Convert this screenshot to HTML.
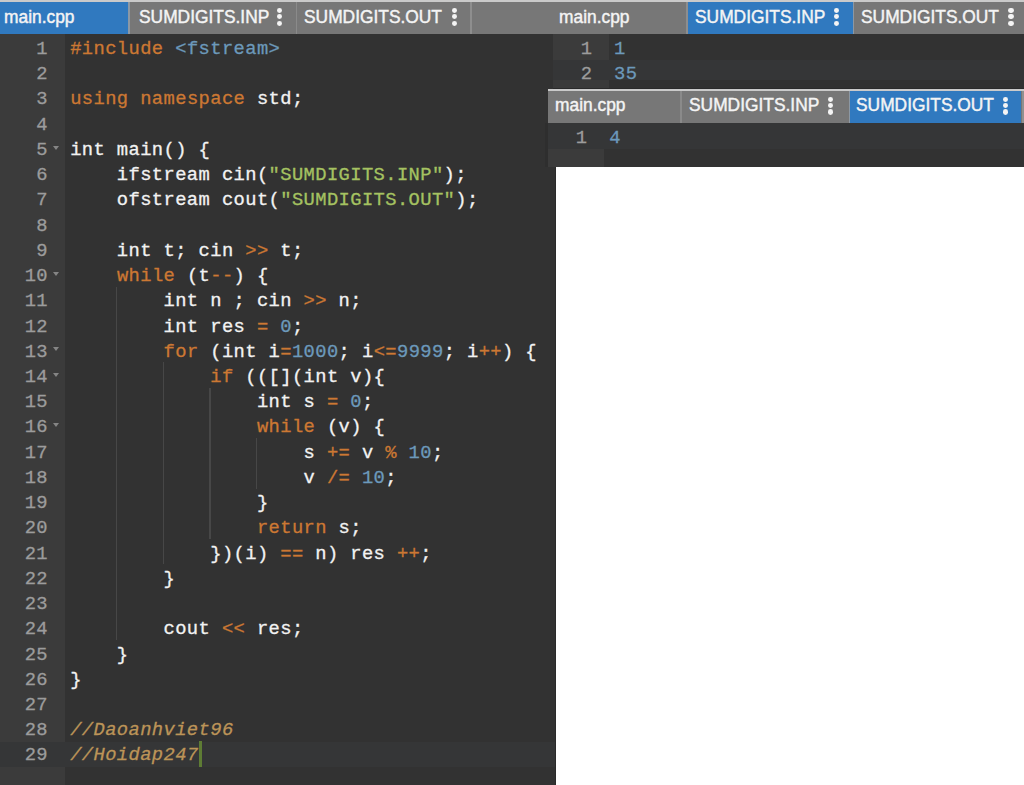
<!DOCTYPE html>
<html><head><meta charset="utf-8">
<style>
*{margin:0;padding:0;box-sizing:border-box}
html,body{width:1024px;height:785px;overflow:hidden;background:#323232;position:relative}
.a{position:absolute}
.tab{position:absolute;color:#f4f4f4;font-family:"Liberation Sans",sans-serif;font-size:18.3px;white-space:nowrap;-webkit-text-stroke:0.45px}
.tab span{position:absolute;transform-origin:0 0;transform:scaleX(0.95)}
.tab i{position:absolute;border-radius:46%;background:#f4f4f4}
.code{font-family:"Liberation Mono",monospace;font-size:18.8px;letter-spacing:0.398px;white-space:pre;color:#f2f2f2;-webkit-text-stroke:0.3px}
.ln{position:absolute;left:0;height:25.23px;line-height:25.23px}
.tx{position:relative;top:2.5px}
.k{color:#cc7833}.n{color:#6c99bb}.s{color:#a5c261}.c{color:#bc9458;font-style:italic}
.fold{position:absolute;width:0;height:0;border-left:3.6px solid transparent;border-right:3.6px solid transparent;border-top:4.6px solid #858585}
</style></head><body>
<div class="a" style="left:0px;top:0px;width:1024px;height:33.9px;background:#777777;"></div>
<div class="a" style="left:0px;top:0px;width:1024px;height:1.8px;background:#cacaca;"></div>
<div class="tab" style="left:0px;top:1.8px;width:128.3px;height:32.1px;background:#3079bf"><span style="left:3.5px;top:4px">main.cpp</span></div>
<div class="a" style="left:128.3px;top:1.8px;width:1.7px;height:32.1px;background:#8c98a4;"></div>
<div class="tab" style="left:130px;top:1.8px;width:166px;height:32.1px;background:#777777"><span style="left:8.5px;top:4px">SUMDIGITS.INP</span><i style="left:147.1px;top:6.1px;width:5.4px;height:5.2px"></i><i style="left:147.1px;top:12.45px;width:5.4px;height:5.2px"></i><i style="left:147.1px;top:18.8px;width:5.4px;height:5.2px"></i></div>
<div class="a" style="left:296px;top:1.8px;width:1.2px;height:32.1px;background:#8a8a8a;"></div>
<div class="tab" style="left:297.2px;top:1.8px;width:173.3px;height:32.1px;background:#777777"><span style="left:7.3px;top:4px">SUMDIGITS.OUT</span><i style="left:154.4px;top:6.1px;width:5.4px;height:5.2px"></i><i style="left:154.4px;top:12.45px;width:5.4px;height:5.2px"></i><i style="left:154.4px;top:18.8px;width:5.4px;height:5.2px"></i></div>
<div class="a" style="left:470.3px;top:1.8px;width:1.4px;height:32.1px;background:#8e8e8e;"></div>
<div class="tab" style="left:553px;top:1.8px;width:135px;height:32.1px;background:#777777"><span style="left:6.1px;top:4px">main.cpp</span></div>
<div class="a" style="left:685.8px;top:1.8px;width:2.2px;height:32.1px;background:#8e8e8e;"></div>
<div class="tab" style="left:688px;top:1.8px;width:164.5px;height:32.1px;background:#3079bf"><span style="left:7.3px;top:4px">SUMDIGITS.INP</span><i style="left:146.1px;top:6.1px;width:5.4px;height:5.2px"></i><i style="left:146.1px;top:12.45px;width:5.4px;height:5.2px"></i><i style="left:146.1px;top:18.8px;width:5.4px;height:5.2px"></i></div>
<div class="a" style="left:852.5px;top:1.8px;width:1.5px;height:32.1px;background:#8c98a4;"></div>
<div class="tab" style="left:854px;top:1.8px;width:170px;height:32.1px;background:#777777"><span style="left:7px;top:4px">SUMDIGITS.OUT</span><i style="left:154.3px;top:6.1px;width:5.4px;height:5.2px"></i><i style="left:154.3px;top:12.45px;width:5.4px;height:5.2px"></i><i style="left:154.3px;top:18.8px;width:5.4px;height:5.2px"></i></div>
<div class="a" style="left:0px;top:33.9px;width:65px;height:751.1px;background:#3b3b3b;"></div>
<div class="a" style="left:0px;top:741.6px;width:555.8px;height:25.8px;background:#353637;"></div>
<div class="a" style="left:115.92px;top:286.8px;width:1.2px;height:353.22px;background:#474747;"></div>
<div class="a" style="left:162.64px;top:362.49px;width:1.2px;height:201.84px;background:#474747;"></div>
<div class="a" style="left:209.36px;top:387.72px;width:1.2px;height:151.38px;background:#474747;"></div>
<div class="a" style="left:256.08px;top:438.18px;width:1.2px;height:50.46px;background:#474747;"></div>
<div class="fold" style="left:52.8px;top:145.62px"></div>
<div class="fold" style="left:52.8px;top:271.77px"></div>
<div class="fold" style="left:52.8px;top:347.46px"></div>
<div class="fold" style="left:52.8px;top:372.69px"></div>
<div class="fold" style="left:52.8px;top:423.15px"></div>
<div class="code" style="position:absolute;left:0;top:34.5px;width:48px;color:#9c9c9c"><div class="ln" style="top:0px;width:48px;text-align:right"><span class="tx">1</span></div><div class="ln" style="top:25.23px;width:48px;text-align:right"><span class="tx">2</span></div><div class="ln" style="top:50.46px;width:48px;text-align:right"><span class="tx">3</span></div><div class="ln" style="top:75.69px;width:48px;text-align:right"><span class="tx">4</span></div><div class="ln" style="top:100.92px;width:48px;text-align:right"><span class="tx">5</span></div><div class="ln" style="top:126.15px;width:48px;text-align:right"><span class="tx">6</span></div><div class="ln" style="top:151.38px;width:48px;text-align:right"><span class="tx">7</span></div><div class="ln" style="top:176.61px;width:48px;text-align:right"><span class="tx">8</span></div><div class="ln" style="top:201.84px;width:48px;text-align:right"><span class="tx">9</span></div><div class="ln" style="top:227.07px;width:48px;text-align:right"><span class="tx">10</span></div><div class="ln" style="top:252.3px;width:48px;text-align:right"><span class="tx">11</span></div><div class="ln" style="top:277.53px;width:48px;text-align:right"><span class="tx">12</span></div><div class="ln" style="top:302.76px;width:48px;text-align:right"><span class="tx">13</span></div><div class="ln" style="top:327.99px;width:48px;text-align:right"><span class="tx">14</span></div><div class="ln" style="top:353.22px;width:48px;text-align:right"><span class="tx">15</span></div><div class="ln" style="top:378.45px;width:48px;text-align:right"><span class="tx">16</span></div><div class="ln" style="top:403.68px;width:48px;text-align:right"><span class="tx">17</span></div><div class="ln" style="top:428.91px;width:48px;text-align:right"><span class="tx">18</span></div><div class="ln" style="top:454.14px;width:48px;text-align:right"><span class="tx">19</span></div><div class="ln" style="top:479.37px;width:48px;text-align:right"><span class="tx">20</span></div><div class="ln" style="top:504.6px;width:48px;text-align:right"><span class="tx">21</span></div><div class="ln" style="top:529.83px;width:48px;text-align:right"><span class="tx">22</span></div><div class="ln" style="top:555.06px;width:48px;text-align:right"><span class="tx">23</span></div><div class="ln" style="top:580.29px;width:48px;text-align:right"><span class="tx">24</span></div><div class="ln" style="top:605.52px;width:48px;text-align:right"><span class="tx">25</span></div><div class="ln" style="top:630.75px;width:48px;text-align:right"><span class="tx">26</span></div><div class="ln" style="top:655.98px;width:48px;text-align:right"><span class="tx">27</span></div><div class="ln" style="top:681.21px;width:48px;text-align:right"><span class="tx">28</span></div><div class="ln" style="top:706.44px;width:48px;text-align:right"><span class="tx">29</span></div></div>
<div class="code" style="position:absolute;left:70.2px;top:34.5px;width:485px"><div class="ln" style="top:0px"><span class="tx"><span class="k">#include</span> <span class="n">&lt;fstream&gt;</span></span></div>
<div class="ln" style="top:25.23px"><span class="tx"></span></div>
<div class="ln" style="top:50.46px"><span class="tx"><span class="k">using</span> <span class="k">namespace</span> std;</span></div>
<div class="ln" style="top:75.69px"><span class="tx"></span></div>
<div class="ln" style="top:100.92px"><span class="tx">int main() {</span></div>
<div class="ln" style="top:126.15px"><span class="tx">    ifstream cin(<span class="s">"SUMDIGITS.INP"</span>);</span></div>
<div class="ln" style="top:151.38px"><span class="tx">    ofstream cout(<span class="s">"SUMDIGITS.OUT"</span>);</span></div>
<div class="ln" style="top:176.61px"><span class="tx"></span></div>
<div class="ln" style="top:201.84px"><span class="tx">    int t; cin <span class="k">&gt;&gt;</span> t;</span></div>
<div class="ln" style="top:227.07px"><span class="tx">    <span class="k">while</span> (t<span class="k">--</span>) {</span></div>
<div class="ln" style="top:252.3px"><span class="tx">        int n ; cin <span class="k">&gt;&gt;</span> n;</span></div>
<div class="ln" style="top:277.53px"><span class="tx">        int res <span class="k">=</span> <span class="n">0</span>;</span></div>
<div class="ln" style="top:302.76px"><span class="tx">        <span class="k">for</span> (int i<span class="k">=</span><span class="n">1000</span>; i<span class="k">&lt;=</span><span class="n">9999</span>; i<span class="k">++</span>) {</span></div>
<div class="ln" style="top:327.99px"><span class="tx">            <span class="k">if</span> (([](int v){</span></div>
<div class="ln" style="top:353.22px"><span class="tx">                int s <span class="k">=</span> <span class="n">0</span>;</span></div>
<div class="ln" style="top:378.45px"><span class="tx">                <span class="k">while</span> (v) {</span></div>
<div class="ln" style="top:403.68px"><span class="tx">                    s <span class="k">+=</span> v <span class="k">%</span> <span class="n">10</span>;</span></div>
<div class="ln" style="top:428.91px"><span class="tx">                    v <span class="k">/=</span> <span class="n">10</span>;</span></div>
<div class="ln" style="top:454.14px"><span class="tx">                }</span></div>
<div class="ln" style="top:479.37px"><span class="tx">                <span class="k">return</span> s;</span></div>
<div class="ln" style="top:504.6px"><span class="tx">            })(i) <span class="k">==</span> n) res <span class="k">++</span>;</span></div>
<div class="ln" style="top:529.83px"><span class="tx">        }</span></div>
<div class="ln" style="top:555.06px"><span class="tx"></span></div>
<div class="ln" style="top:580.29px"><span class="tx">        cout <span class="k">&lt;&lt;</span> res;</span></div>
<div class="ln" style="top:605.52px"><span class="tx">    }</span></div>
<div class="ln" style="top:630.75px"><span class="tx">}</span></div>
<div class="ln" style="top:655.98px"><span class="tx"></span></div>
<div class="ln" style="top:681.21px"><span class="tx"><span class="c">//Daoanhviet96</span></span></div>
<div class="ln" style="top:706.44px"><span class="tx"><span class="c">//Hoidap247</span></span></div></div>
<div class="a" style="left:199.4px;top:741.3px;width:2.2px;height:25.6px;background:#5e7c34;"></div>
<div class="a" style="left:553px;top:33.9px;width:471px;height:26.4px;background:#323232;"></div>
<div class="a" style="left:553px;top:33.9px;width:55.8px;height:26.4px;background:#3b3b3b;"></div>
<div class="a" style="left:553px;top:60.3px;width:471px;height:19.5px;background:#353637;"></div>
<div class="a" style="left:553px;top:79.8px;width:471px;height:8.5px;background:#313131;"></div>
<div class="a" style="left:553px;top:79.8px;width:55.8px;height:8.5px;background:#3a3a3a;"></div>
<div class="a" style="left:552.5px;top:88.2px;width:471.5px;height:0.8px;background:#2a2a2a;"></div>
<div class="code" style="position:absolute;left:553px;top:34.5px"><div class="ln" style="top:0;width:39.3px;text-align:right;color:#9c9c9c"><span class="tx">1</span></div><div class="ln" style="top:0;left:61px"><span class="tx n">1</span></div></div>
<div class="code" style="position:absolute;left:553px;top:59.73px"><div class="ln" style="top:0;width:39.3px;text-align:right;color:#9c9c9c"><span class="tx">2</span></div><div class="ln" style="top:0;left:61px"><span class="tx n">35</span></div></div>
<div class="a" style="left:545px;top:123.3px;width:3px;height:43.7px;background:#2e2e2e;"></div>
<div class="a" style="left:548px;top:88.8px;width:476px;height:34.5px;background:#777777;"></div>
<div class="a" style="left:548px;top:88.8px;width:476px;height:1.9px;background:#cacaca;"></div>
<div class="tab" style="left:548px;top:90.7px;width:132px;height:32.6px;background:#777777"><span style="left:6.8px;top:3.1px">main.cpp</span></div>
<div class="a" style="left:680px;top:90.7px;width:1.5px;height:32.6px;background:#8a8a8a;"></div>
<div class="tab" style="left:681.5px;top:90.7px;width:167.5px;height:32.6px;background:#777777"><span style="left:7.2px;top:3.1px">SUMDIGITS.INP</span><i style="left:146.6px;top:6px;width:5.4px;height:5.2px"></i><i style="left:146.6px;top:12.35px;width:5.4px;height:5.2px"></i><i style="left:146.6px;top:18.7px;width:5.4px;height:5.2px"></i></div>
<div class="a" style="left:849px;top:90.7px;width:1.2px;height:32.6px;background:#8c98a4;"></div>
<div class="tab" style="left:850.2px;top:90.7px;width:171.3px;height:32.6px;background:#3079bf"><span style="left:6.1px;top:3.1px">SUMDIGITS.OUT</span><i style="left:152.4px;top:6px;width:5.4px;height:5.2px"></i><i style="left:152.4px;top:12.35px;width:5.4px;height:5.2px"></i><i style="left:152.4px;top:18.7px;width:5.4px;height:5.2px"></i></div>
<div class="a" style="left:1021.5px;top:90.7px;width:2.5px;height:32.6px;background:#909090;"></div>
<div class="a" style="left:548px;top:123.3px;width:476px;height:25.6px;background:#353637;"></div>
<div class="a" style="left:548px;top:148.9px;width:476px;height:17.8px;background:#323232;"></div>
<div class="a" style="left:548px;top:148.9px;width:56px;height:17.8px;background:#3b3b3b;"></div>
<div class="code" style="position:absolute;left:548px;top:123.3px"><div class="ln" style="top:0;width:39.5px;text-align:right;color:#9c9c9c"><span class="tx">1</span></div><div class="ln" style="top:0;left:61.2px"><span class="tx n">4</span></div></div>
<div class="a" style="left:555.8px;top:167px;width:468.2px;height:618px;background:#ffffff;"></div>
<div class="a" style="left:555.3px;top:167px;width:1px;height:618px;background:#2a2a2a;"></div>
</body></html>
